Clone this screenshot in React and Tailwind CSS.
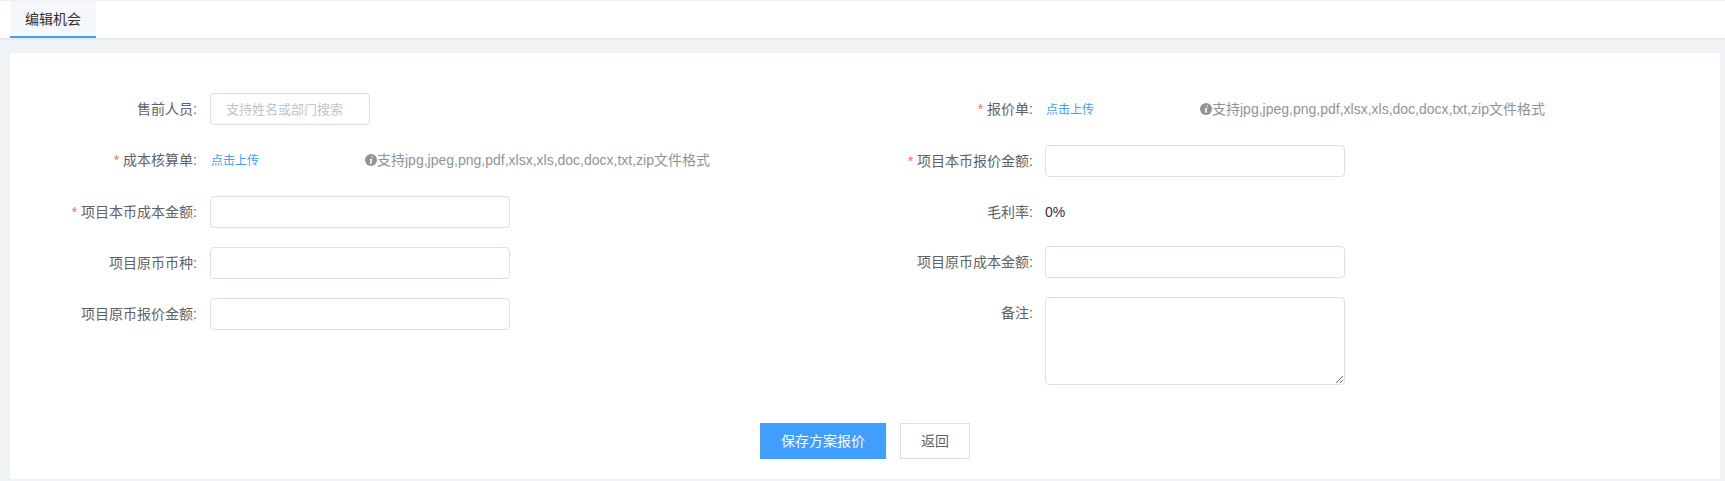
const stack = "font-['Liberation_Sans','Noto_Sans_CJK_SC',sans-serif]";

function Label({ required, children, className = "" }) {
  return (
    <div className={`w-[188px] shrink-0 text-right text-sm leading-5 text-[#606266] ${className}`}>
      {required && <span className="mr-1 text-[#f56c6c]">*</span>}
      {children}:
    </div>
  );
}

function Input({ narrow, placeholder }) {
  return (
    <input
      placeholder={placeholder}
      className={`${narrow ? "w-[160px]" : "w-[300px]"} h-8 rounded border border-[#dcdfe6] bg-white px-[15px] text-[13px] outline-none placeholder:text-[#c0c4cc]`}
    />
  );
}

function Info() {
  return (
    <svg viewBox="0 0 12 12" className="h-3 w-3 shrink-0" aria-hidden="true">
      <circle cx="6" cy="6" r="6" fill="#909399" />
      <path d="M6.6 2.4h1.3l-.3 1.3H6.3zM5 5h2.3l-.9 3.6h.8l-.2.9H4.7l.9-3.6h-.8z" fill="#fff" />
    </svg>
  );
}

function Upload() {
  return (
    <div className="flex items-center pl-px">
      <span className="w-[154px] pt-px text-xs leading-5 text-[#409eff]">点击上传</span>
      <span className="flex items-center text-sm leading-5 text-[#909399]">
        <Info />
        支持jpg,jpeg,png,pdf,xlsx,xls,doc,docx,txt,zip文件格式
      </span>
    </div>
  );
}

function Row({ label, required, children, className = "", top, labelClass }) {
  return (
    <div className={`flex ${top ? "items-start" : "h-8 items-center"} gap-3 ${className}`}>
      <Label required={required} className={labelClass}>{label}</Label>
      {children}
    </div>
  );
}

export default function App() {
  return (
    <div className={`${stack} h-[481px] w-[1725px] overflow-hidden bg-[#eff3f5]`}>
      <div className="h-[38px] border-t border-[#eef0f3] bg-white pl-2.5 shadow-[0_1px_3px_rgba(0,21,41,0.08)]">
        <div className="flex h-[37px] w-[86px] items-center justify-center border-b-2 border-[#409eff] bg-[#f5f7fa] text-sm text-[#303133]">
          编辑机会
        </div>
      </div>
      <div className="ml-2.5 mr-[5px] mt-[15px] h-[426px] bg-white pt-10">
        <div className="flex">
          <div className="flex w-[835px] flex-col">
            <Row label="售前人员" labelClass="pr-px"><Input narrow placeholder="支持姓名或部门搜索" /></Row>
            <Row label="成本核算单" required labelClass="pr-px" className="mt-[19px]"><Upload /></Row>
            <Row label="项目本币成本金额" required labelClass="pr-px" className="mt-5"><Input /></Row>
            <Row label="项目原币币种" labelClass="pr-px" className="mt-[19px]"><Input /></Row>
            <Row label="项目原币报价金额" labelClass="pr-px" className="mt-[19px]"><Input /></Row>
          </div>
          <div className="flex flex-col">
            <Row label="报价单" required><Upload /></Row>
            <Row label="项目本币报价金额" required className="mt-5"><Input /></Row>
            <Row label="毛利率" className="mt-[19px]"><span className="text-sm text-[#303133]">0%</span></Row>
            <Row label="项目原币成本金额" className="mt-[18px]"><Input /></Row>
            <Row label="备注" top labelClass="mt-1.5" className="mt-[19px]">
              <textarea className="h-[88px] w-[300px] rounded border border-[#dcdfe6] bg-white px-[15px] py-1 text-[13px] outline-none" />
            </Row>
          </div>
        </div>
        <div className="ml-[750px] mt-[38px] flex gap-3.5">
          <button className="h-9 w-[126px] bg-[#409eff] text-sm text-white">保存方案报价</button>
          <button className="h-9 w-[70px] border border-[#dcdfe6] bg-white text-sm text-[#606266]">返回</button>
        </div>
      </div>
    </div>
  );
}
